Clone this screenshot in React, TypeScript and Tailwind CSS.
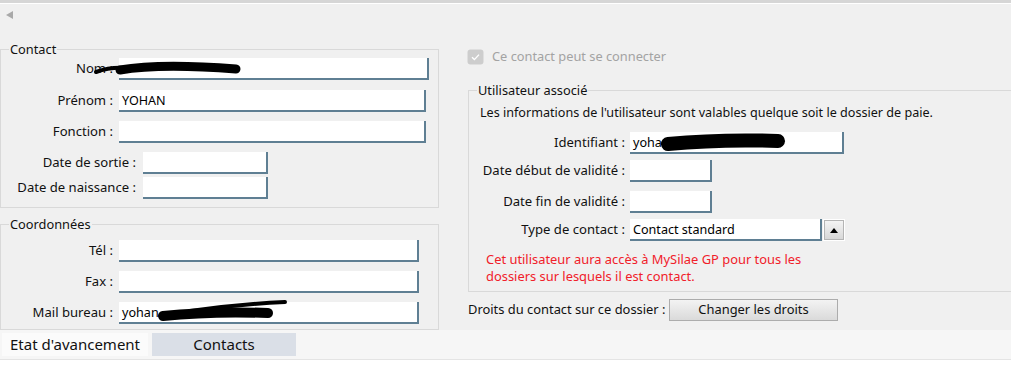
import React from "react";

const FONT = { fontFamily: '"Noto Sans", "Open Sans", sans-serif' };

function Field({ w, value }: { w: number; value?: string }) {
  return (
    <div
      className="h-[22px] bg-white border-r-2 border-b-2 border-[#5f7f93] pl-[3px] text-[12.6px] leading-[21px] text-black whitespace-nowrap overflow-hidden"
      style={{ width: w }}
    >
      {value}
    </div>
  );
}

function Row({
  label,
  labelW,
  gap,
  w,
  value,
  className,
}: {
  label: string;
  labelW: number;
  gap: number;
  w: number;
  value?: string;
  className: string;
}) {
  return (
    <div className={"flex items-center " + className}>
      <div className="shrink-0 text-right text-[13.1px] text-[#111] whitespace-nowrap" style={{ width: labelW }}>
        {label}
      </div>
      <div className="shrink-0" style={{ marginLeft: gap }}>
        <Field w={w} value={value} />
      </div>
    </div>
  );
}

export default function App() {
  return (
    <div className="relative w-[1011px] h-[382px] overflow-hidden bg-[#f0f0f0] flex flex-col text-[#111]" style={FONT}>
      <div className="h-[3px] bg-[#d6d6d6]" />
      <div className="h-px bg-white" />
      <div className="h-[36px]">
        <div className="ml-[6px] mt-[7px] w-0 h-0 border-y-[4.5px] border-y-transparent border-r-[7px] border-r-[#a9a9a9]" />
      </div>

      <div className="h-[290px] flex">
        {/* Left column */}
        <div className="w-[439px] shrink-0 flex flex-col">
          <fieldset className="mt-[1px] h-[167px] border border-[#d9d9d9] flex flex-col">
            <legend className="ml-[8px] px-[1px] text-[12.8px] leading-[16px]">Contact</legend>
            <Row label="Nom :" labelW={112} gap={6} w={310} className="mt-[1px]" />
            <Row label="Prénom :" labelW={112} gap={6} w={307} value="YOHAN" className="mt-[10px]" />
            <Row label="Fonction :" labelW={112} gap={6} w={307} className="mt-[9px]" />
            <Row label="Date de sortie :" labelW={135} gap={7} w={125} className="mt-[9px]" />
            <Row label="Date de naissance :" labelW={135} gap={7} w={125} className="mt-[3px]" />
          </fieldset>
          <fieldset className="mt-[8px] h-[114px] border border-[#d9d9d9] flex flex-col">
            <legend className="ml-[8px] px-[1px] text-[12.8px] leading-[16px]">Coordonnées</legend>
            <Row label="Tél :" labelW={112} gap={6} w={300} className="mt-[8px]" />
            <Row label="Fax :" labelW={112} gap={6} w={300} className="mt-[9px]" />
            <Row label="Mail bureau :" labelW={112} gap={6} w={300} value="yohan" className="mt-[9px]" />
          </fieldset>
        </div>

        {/* Right column */}
        <div className="ml-[28px] flex flex-col min-w-0">
          <div className="mt-[9px] flex items-center h-[16px]">
            <svg width="17" height="16" viewBox="0 0 17 16">
              <rect x="0.5" y="0.5" width="16" height="15" rx="3" fill="#cdcdcd" />
              <path d="M5 8.3 L7.4 10.6 L12 5.6" fill="none" stroke="#ffffff" strokeWidth="1.4" />
            </svg>
            <span className="ml-[8px] text-[12.8px] text-[#a3a3a3] whitespace-nowrap">Ce contact peut se connecter</span>
          </div>

          <fieldset className="mt-[17px] ml-[1px] w-[600px] h-[210px] border border-[#d9d9d9] flex flex-col">
            <legend className="ml-[8px] px-[1px] text-[12.8px] leading-[16px]">Utilisateur associé</legend>
            <div className="mt-[7px] ml-[11px] text-[12.6px] leading-[16px] whitespace-nowrap">
              Les informations de l'utilisateur sont valables quelque soit le dossier de paie.
            </div>
            <Row label="Identifiant :" labelW={156} gap={5} w={214} value="yoha" className="mt-[11px]" />
            <Row label="Date début de validité :" labelW={156} gap={5} w={82} className="mt-[6px]" />
            <Row label="Date fin de validité :" labelW={156} gap={5} w={82} className="mt-[9px]" />
            <div className="mt-[6px] flex items-center">
              <div className="w-[156px] text-right text-[13.1px] whitespace-nowrap">Type de contact :</div>
              <div className="ml-[5px]">
                <Field w={192} value="Contact standard" />
              </div>
              <div className="ml-[1px] w-[22px] h-[22px] border border-white">
                <div className="w-full h-full border border-[#b5b5b5] bg-gradient-to-b from-[#f4f4f4] to-[#d8d8d8] flex items-center justify-center">
                  <div className="w-0 h-0 border-x-[4px] border-x-transparent border-b-[5px] border-b-black" />
                </div>
              </div>
            </div>
            <div className="mt-[10px] ml-[17px] text-[12.9px] leading-[17px] text-[#f0202a]">
              <div>Cet utilisateur aura accès à MySilae GP pour tous les</div>
              <div>dossiers sur lesquels il est contact.</div>
            </div>
          </fieldset>

          <div className="mt-[7px] ml-[1px] flex items-center">
            <span className="w-[201px] text-[12.9px] whitespace-nowrap">Droits du contact sur ce dossier :</span>
            <button className="w-[169px] h-[22px] border border-[#acacac] bg-gradient-to-b from-[#f3f3f3] to-[#dadada] text-[12.9px] text-[#111]">
              Changer les droits
            </button>
          </div>
        </div>
      </div>

      {/* Tab strip */}
      <div className="h-[29px] bg-[#f6f6f6] flex items-start pt-[3px] pl-[2px] gap-[4px]">
        <div className="w-[146px] h-[23px] bg-[#fbfbfb] text-[15px] leading-[23px] pl-[8px] whitespace-nowrap">
          Etat d'avancement
        </div>
        <div className="w-[144px] h-[23px] bg-[#dadfe7] text-[15px] leading-[23px] text-center">Contacts</div>
      </div>
      <div className="h-px bg-[#e4e4e4]" />
      <div className="flex-1 bg-white" />

      {/* redaction marks */}
      <svg className="absolute left-0 top-0 pointer-events-none" width="1011" height="382" viewBox="0 0 1011 382">
        <path d="M96 72 Q110 67 125 68" stroke="#000" strokeWidth="4" fill="none" strokeLinecap="round" />
        <path d="M120 70 Q160 63 236 69" stroke="#000" strokeWidth="9" fill="none" strokeLinecap="round" />
        <path d="M163 316 Q210 311 268 313" stroke="#000" strokeWidth="10" fill="none" strokeLinecap="round" />
        <path d="M190 311 Q240 304 285 302" stroke="#000" strokeWidth="4" fill="none" strokeLinecap="round" />
        <path d="M668 144 Q720 139 778 141" stroke="#000" strokeWidth="14" fill="none" strokeLinecap="round" />
        <path d="M700 137 L786 141 L700 147 Z" fill="#000" />
      </svg>
    </div>
  );
}
